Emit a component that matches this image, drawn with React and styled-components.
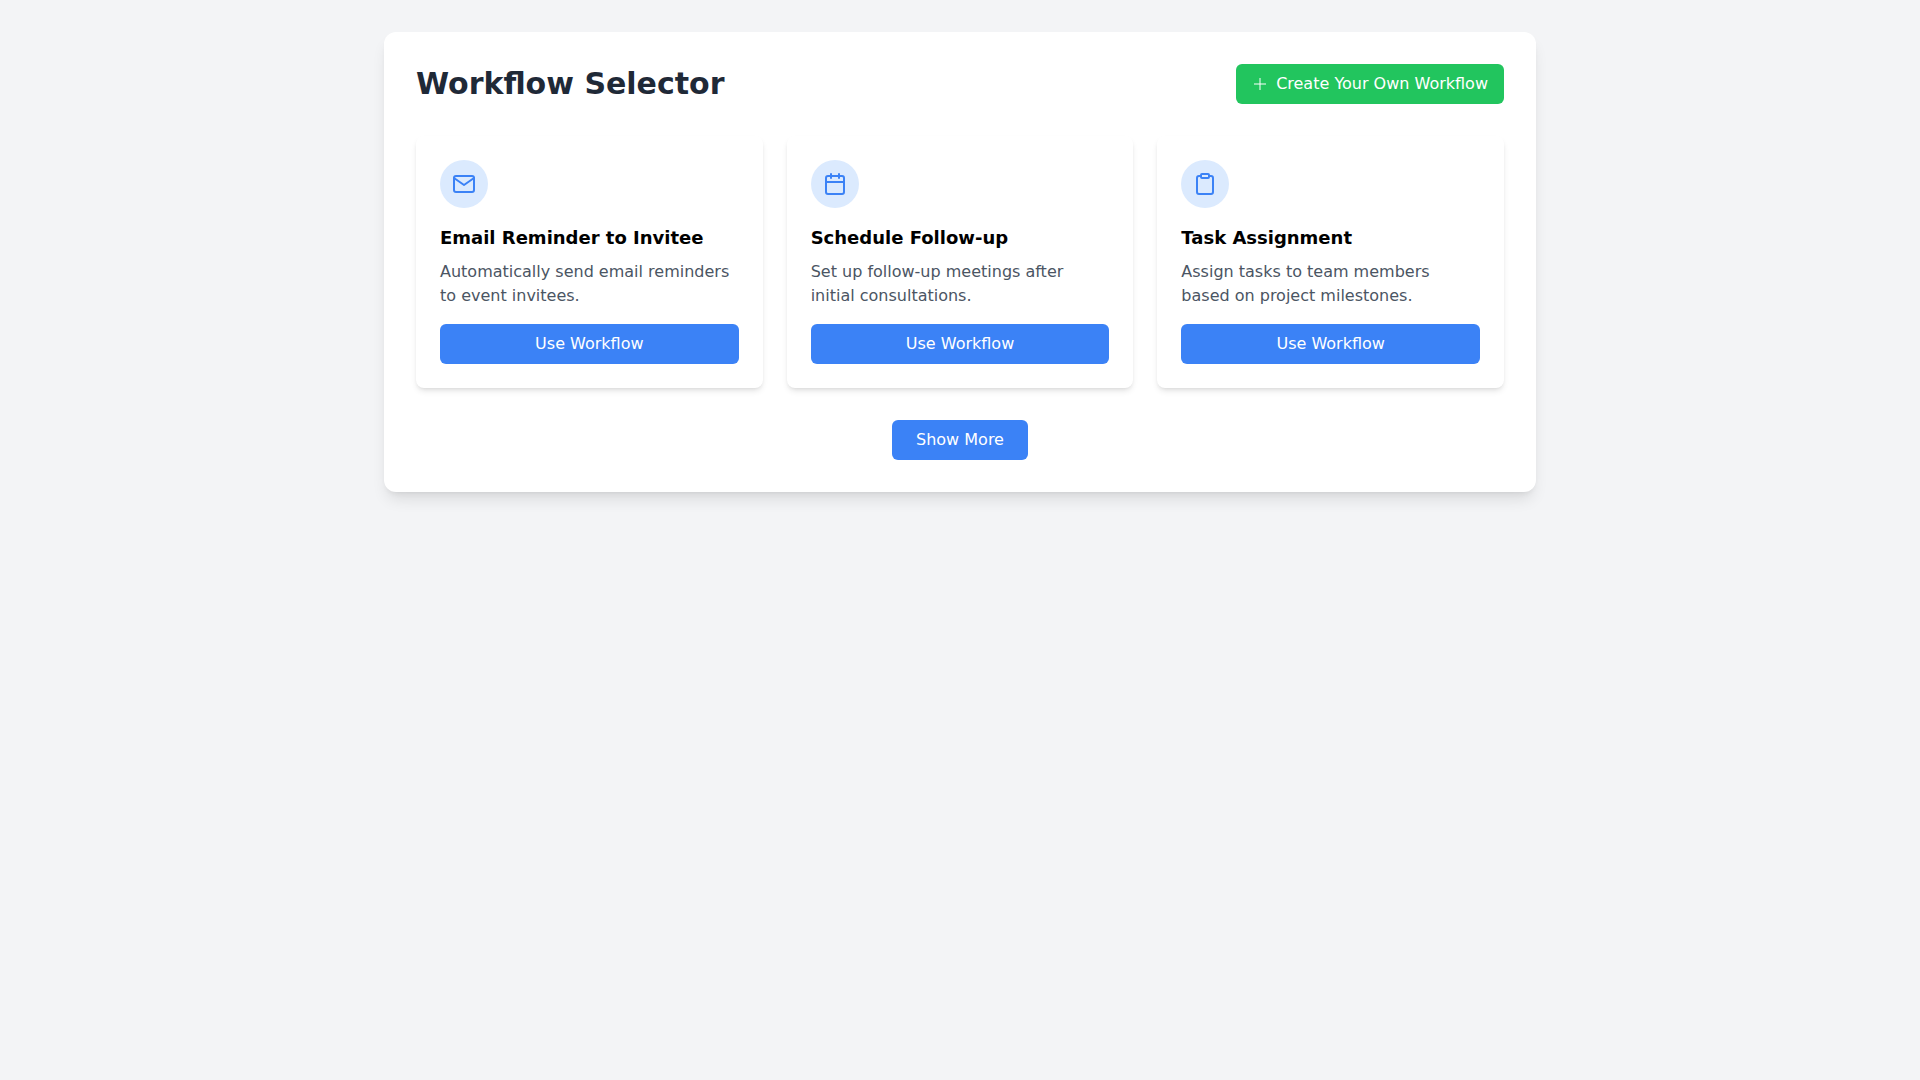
import styled, { createGlobalStyle } from 'styled-components'
import { FiMail, FiCalendar, FiClipboard } from 'react-icons/fi'

const workflows = [
  {
    title: 'Email Reminder to Invitee',
    description: 'Automatically send email reminders to event invitees.',
    Icon: FiMail,
  },
  {
    title: 'Schedule Follow-up',
    description: 'Set up follow-up meetings after initial consultations.',
    Icon: FiCalendar,
  },
  {
    title: 'Task Assignment',
    description: 'Assign tasks to team members based on project milestones.',
    Icon: FiClipboard,
  },
]

const PlusIcon = () => (
  <svg width="16" height="16" viewBox="0 0 16 16" fill="none" stroke="currentColor" strokeWidth="1" aria-hidden="true">
    <path d="M8 2v12M2 8h12" />
  </svg>
)

const App = () => {
  return (
    <>
      <GlobalStyle />
      <Page>
        <Panel>
          <Header>
            <Title>Workflow Selector</Title>
            <Button type="button" $color="#22c55e" $hover="#16a34a">
              <PlusIcon />
              Create Your Own Workflow
            </Button>
          </Header>
          <Grid>
            {workflows.map(({ title, description, Icon }) => (
              <Card key={title}>
                <IconCircle>
                  <Icon />
                </IconCircle>
                <CardTitle>{title}</CardTitle>
                <Description>{description}</Description>
                <Button type="button" $full>Use Workflow</Button>
              </Card>
            ))}
          </Grid>
          <Footer>
            <Button type="button" $wide>Show More</Button>
          </Footer>
        </Panel>
      </Page>
    </>
  )
}

const GlobalStyle = createGlobalStyle`
  *, *::before, *::after {
    box-sizing: border-box;
  }

  body {
    margin: 0;
    background-color: #f3f4f6;
    font-family: "DejaVu Sans", sans-serif;
    font-size: 16px;
    line-height: 24px;
  }
`

const Page = styled.div`
  min-height: 100vh;
  padding: 32px;
`

const Panel = styled.main`
  max-width: 1152px;
  margin: 0 auto;
  padding: 32px;
  background-color: #fff;
  border-radius: 12px;
  box-shadow: 0 10px 15px -3px rgba(0,0,0,0.1), 0 4px 6px -4px rgba(0,0,0,0.1);
`

const Header = styled.header`
  display: flex;
  align-items: center;
  justify-content: space-between;
  margin-bottom: 32px;
`

const Title = styled.h1`
  margin: 0;
  color: #1f2937;
  font-size: 30px;
  font-weight: 700;
  line-height: 36px;
`

const Button = styled.button`
  display: flex;
  align-items: center;
  justify-content: center;
  gap: 8px;
  width: ${({$full}) => $full ? '100%' : 'auto'};
  padding: 8px ${({$wide}) => $wide ? '24px' : '16px'};
  border: none;
  border-radius: 6px;
  background-color: ${({$color}) => $color || '#3b82f6'};
  color: #fff;
  font: inherit;
  cursor: pointer;
  transition: background-color 0.3s ease;

  &:hover{
    background-color: ${({$hover}) => $hover || '#2563eb'};
  }
`

const Grid = styled.div`
  display: grid;
  grid-template-columns: repeat(3, minmax(0, 1fr));
  gap: 24px;

  @media (max-width: 1023px) {
    grid-template-columns: repeat(2, minmax(0, 1fr));
  }

  @media (max-width: 767px) {
    grid-template-columns: minmax(0, 1fr);
  }
`

const Card = styled.article`
  padding: 24px;
  background-color: #fff;
  border-radius: 8px;
  box-shadow: 0 4px 6px -1px rgba(0,0,0,0.1), 0 2px 4px -2px rgba(0,0,0,0.1);
`

const IconCircle = styled.div`
  display: flex;
  align-items: center;
  justify-content: center;
  width: 48px;
  height: 48px;
  margin-bottom: 16px;
  border-radius: 50%;
  background-color: #dbeafe;
  color: #3b82f6;
  font-size: 24px;
`

const CardTitle = styled.h2`
  margin: 0 0 8px;
  color: #000;
  font-size: 18px;
  font-weight: 600;
  line-height: 28px;
`

const Description = styled.p`
  margin: 0 0 16px;
  color: #4b5563;
`

const Footer = styled.div`
  display: flex;
  justify-content: center;
  margin-top: 32px;
`

export default App
